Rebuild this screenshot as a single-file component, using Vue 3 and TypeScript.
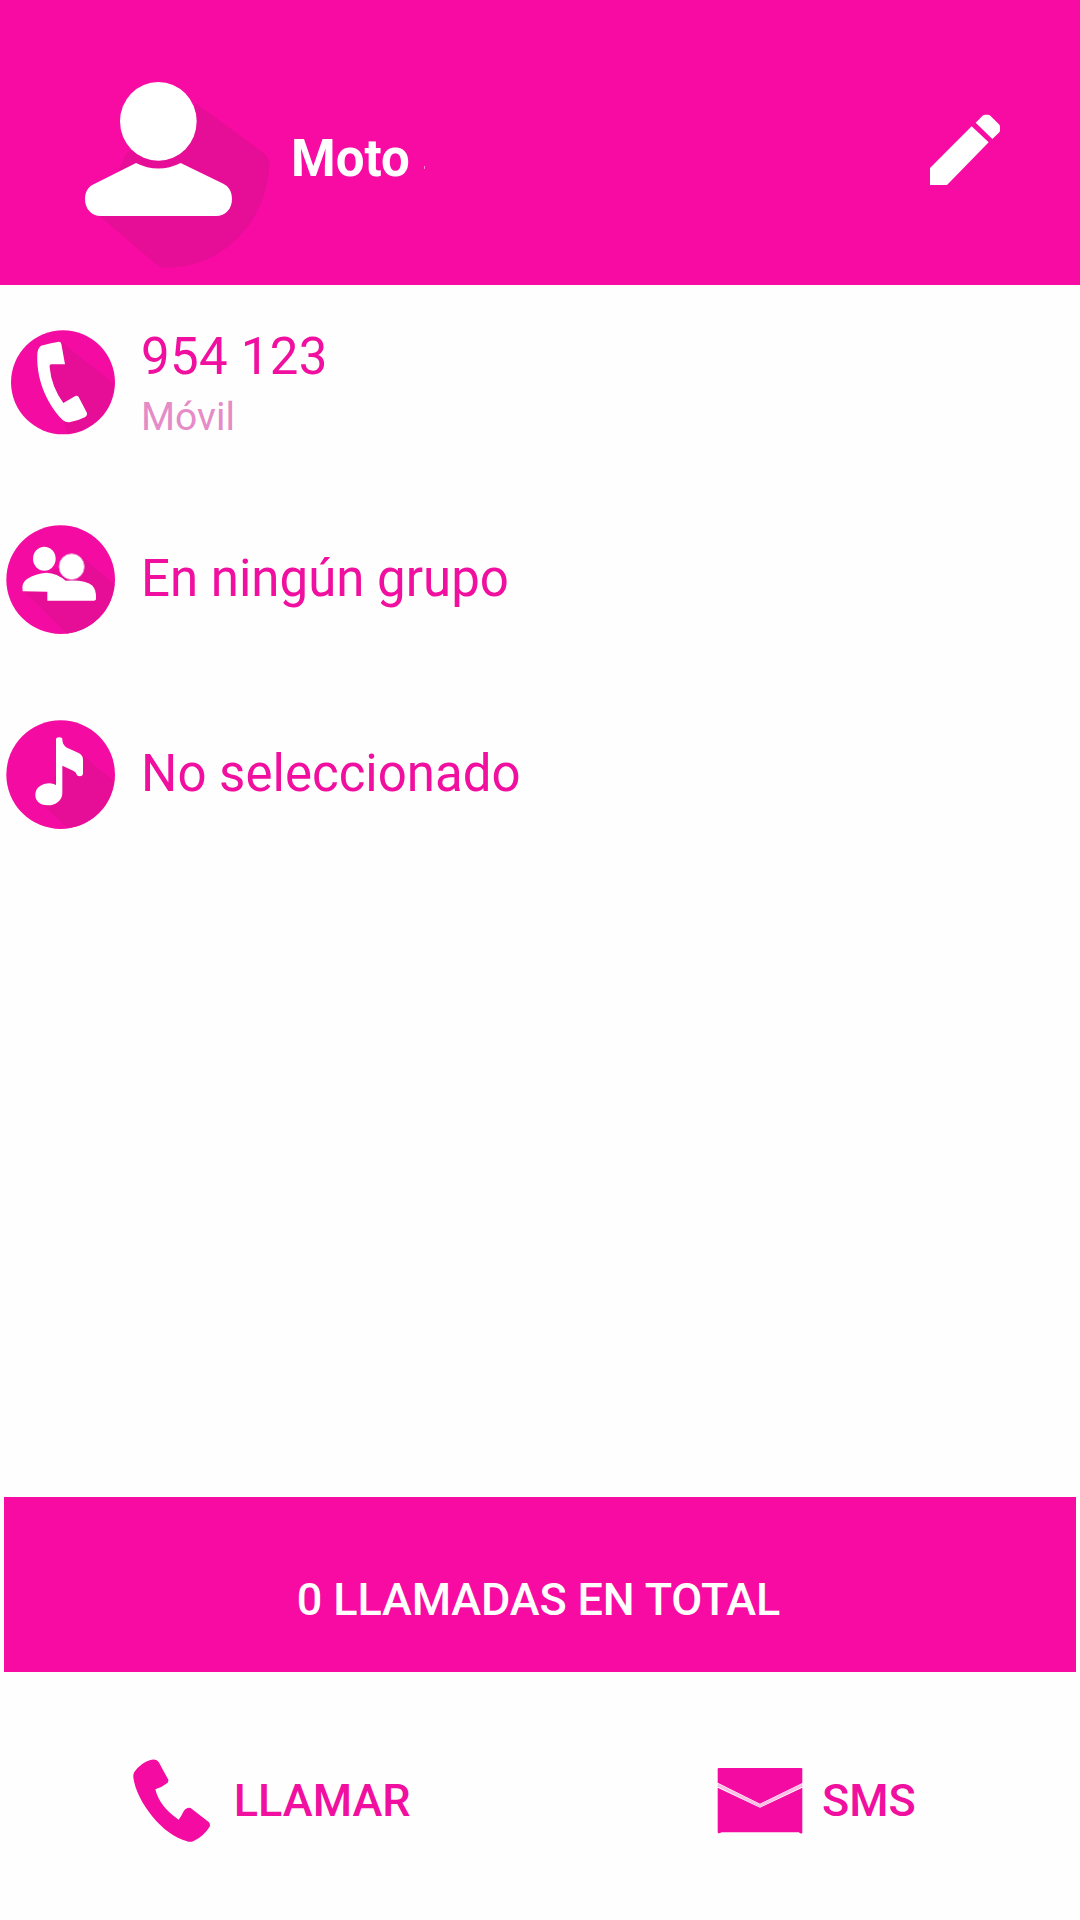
<script setup lang="ts">
import { ref } from 'vue'

type IconName = 'phone' | 'group' | 'ringtone'

interface DetailRow {
  icon: IconName
  title: string
  subtitle?: string
}

const contactName = ref('Moto')
const totalCalls = ref(0)

const rows: DetailRow[] = [
  { icon: 'phone', title: '954 123', subtitle: 'Móvil' },
  { icon: 'group', title: 'En ningún grupo' },
  { icon: 'ringtone', title: 'No seleccionado' },
]
</script>

<template>
  <main class="screen">
    <header class="header">
      <svg class="avatar" viewBox="0 0 690 675" aria-hidden="true">
        <path class="shade" d="M410 132 L606 276 Q628 292 628 310 C624 480 490 628 310 623 Q300 622 290 614 L112 462 L200 280 Z" />
        <path class="white" d="M228 309 Q295 342 362 309 L490 371 C507 379 516 396 516 417 C516 446 497 468 468 468 H122 C94 468 75 446 75 417 C75 397 83 382 98 374 Z" />
        <ellipse class="white" cx="295" cy="184" rx="115" ry="118" />
      </svg>
      <h1 class="name">{{ contactName }}</h1>
      <span class="speck"></span>
      <button class="edit" type="button" aria-label="Editar">
        <svg viewBox="0 0 390 360" aria-hidden="true">
          <path class="white" d="M90 234 L215 109 L266 157 L141 285 H90 Z" />
          <path class="white" d="M227 98 L247 78 Q250 74 256 74 H264 Q268 74 271 77 L297 103 Q300 106 300 111 V121 Q300 124 298 127 L277 147 Z" />
        </svg>
      </button>
    </header>

    <section class="details">
      <div v-for="row in rows" :key="row.icon" class="row">
        <svg v-if="row.icon === 'phone'" class="badge" viewBox="0 15 390 417" aria-hidden="true">
          <circle class="disc" cx="189" cy="217" r="156" />
          <path class="shade" d="M184 96 L342 221 A156 156 0 0 1 202 372 L190 330 L145 165 Z" />
          <path class="white" d="M123 107 Q150 99 176 95 Q183 95 184 102 L195 163 H154 Q148 163 149 172 Q154 230 190 279 L226 258 Q232 255 236 261 L261 309 Q263 317 256 321 Q235 332 208 337 Q197 338 188 330 C150 292 108 220 112 133 Q113 114 123 107 Z" />
        </svg>
        <svg v-else-if="row.icon === 'group'" class="badge" viewBox="0 0 390 417" aria-hidden="true">
          <circle class="disc" cx="182" cy="209" r="163" />
          <path class="shade" d="M250 143 L343 223 A163 163 0 0 1 200 371 L72 244 L160 180 Z" />
          <ellipse class="white" cx="133" cy="146" rx="34" ry="36" />
          <path class="white" d="M68 244 Q63 219 81 207 Q107 190 139 188 Q172 190 197 212 Q255 208 276 226 Q290 240 288 268 Q287 272 282 272 H142 V245 Z" />
          <ellipse class="edge" cx="215" cy="170" rx="38" ry="39" />
        </svg>
        <svg v-else class="badge" viewBox="0 0 390 417" aria-hidden="true">
          <circle class="disc" cx="182" cy="209" r="163" />
          <path class="shade" d="M248 150 L342 229 A163 163 0 0 1 205 370 L117 290 L180 190 Z" />
          <path class="white" d="M168 103 Q168 97 178 97 Q187 97 187 103 Q187 121 201 128 L236 144 Q249 151 249 164 V204 Q249 214 239 214 Q231 214 229 207 Q229 202 221 198 L187 182 V264 C187 288 165 302 142 301 C119 300 106 288 106 270 C106 247 127 235 148 235 Q160 235 168 240 Z" />
        </svg>
        <div class="texts" :class="{ double: row.subtitle }">
          <span class="title">{{ row.title }}</span>
          <span v-if="row.subtitle" class="subtitle">{{ row.subtitle }}</span>
        </div>
      </div>
    </section>

    <div class="banner">{{ totalCalls }} LLAMADAS EN TOTAL</div>

    <footer class="actions">
      <button class="action call" type="button">
        <svg class="call-icon" viewBox="30 48 250 268" aria-hidden="true">
          <path d="M43 96 Q63 68 91 60 Q108 56 116 66 L145 119 Q146 126 141 130 Q128 141 106 148 Q119 201 176 239 Q184 229 191 214 Q199 201 212 204 L267 247 Q272 253 269 260 Q251 289 221 303 Q210 308 199 303 C128 286 48 183 40 112 Q39 103 43 96 Z" />
        </svg>
        <span>LLAMAR</span>
      </button>
      <button class="action sms" type="button">
        <svg class="mail-icon" viewBox="48 78 264 208" aria-hidden="true">
          <path d="M56 84 H304 Q307 84 307 88 V129 L180 191 L53 128 V88 Q53 84 56 84 Z" />
          <path d="M53 143 L180 203 L307 143 V278 Q305 282 301 280 L296 277 H65 Q58 281 55 280 Q53 279 53 275 Z" />
          <path class="fold" d="M53 135 L180 197 L307 135" />
        </svg>
        <span>SMS</span>
      </button>
    </footer>
  </main>
</template>

<style>
body {
  margin: 0;
  background: #fefefe;
}
</style>

<style scoped>
.screen {
  display: flex;
  flex-direction: column;
  width: 1080px;
  height: 1920px;
  overflow: hidden;
  background: #fefefe;
  color: #f00f9f;
  font-family: Roboto, sans-serif;
}

svg {
  display: block;
  flex: none;
}

button {
  padding: 0;
  border: 0;
  background: none;
  color: inherit;
  font: inherit;
}

.white {
  fill: #fff;
}

.edge {
  fill: #fff;
  stroke: #f487cf;
  stroke-width: 3;
}

.disc {
  fill: #f40ca2;
}

.shade {
  fill: #e60d97;
}

.header {
  display: flex;
  box-sizing: border-box;
  height: 285px;
  padding: 60px 50px 0 60px;
  background: #f70ba2;
}

.avatar {
  width: 230px;
  height: 225px;
}

.name {
  margin: 69px 0 0 1px;
  color: #fff;
  font-size: 51px;
  font-weight: 700;
  line-height: 60px;
}

.speck {
  width: 1px;
  height: 3px;
  margin: 106px 0 0 14px;
  background: #fb86d1;
}

.edit {
  width: 130px;
  height: 120px;
  margin: 30px 0 0 auto;
}

.edit svg {
  width: 130px;
  height: 120px;
}

.details {
  padding-top: 2px;
}

.row {
  display: flex;
  align-items: center;
  height: 195px;
}

.badge {
  width: 130px;
  height: 139px;
}

.texts {
  display: flex;
  flex-direction: column;
  margin-left: 11px;
  padding-bottom: 2px;
}

.texts.double {
  padding: 4px 0 0;
}

.title {
  font-size: 51px;
  line-height: 60px;
}

.double .title {
  letter-spacing: 0.3px;
}

.subtitle {
  color: #e58bc7;
  font-size: 39px;
  line-height: 60px;
}

.banner {
  box-sizing: border-box;
  height: 175px;
  margin: auto 4px 0;
  padding: 73px 3px 0 0;
  background: #f70ba2;
  color: #fff;
  font-size: 45px;
  font-weight: 500;
  letter-spacing: -0.15px;
  line-height: 60px;
  text-align: center;
}

.actions {
  display: flex;
  height: 248px;
}

.action {
  display: flex;
  align-items: center;
  width: 540px;
  height: 257px;
  font-size: 45px;
  font-weight: 500;
  line-height: 60px;
}

.call {
  padding-left: 130px;
}

.sms {
  padding-left: 176px;
}

.call-icon {
  width: 83.3px;
  height: 89.3px;
  margin-right: 20.5px;
  fill: #f40ca2;
}

.mail-icon {
  width: 88px;
  height: 69.3px;
  margin-right: 18px;
  fill: #f40ca2;
}

.fold {
  fill: none;
  stroke: #fcbce5;
  stroke-width: 8;
}
</style>
